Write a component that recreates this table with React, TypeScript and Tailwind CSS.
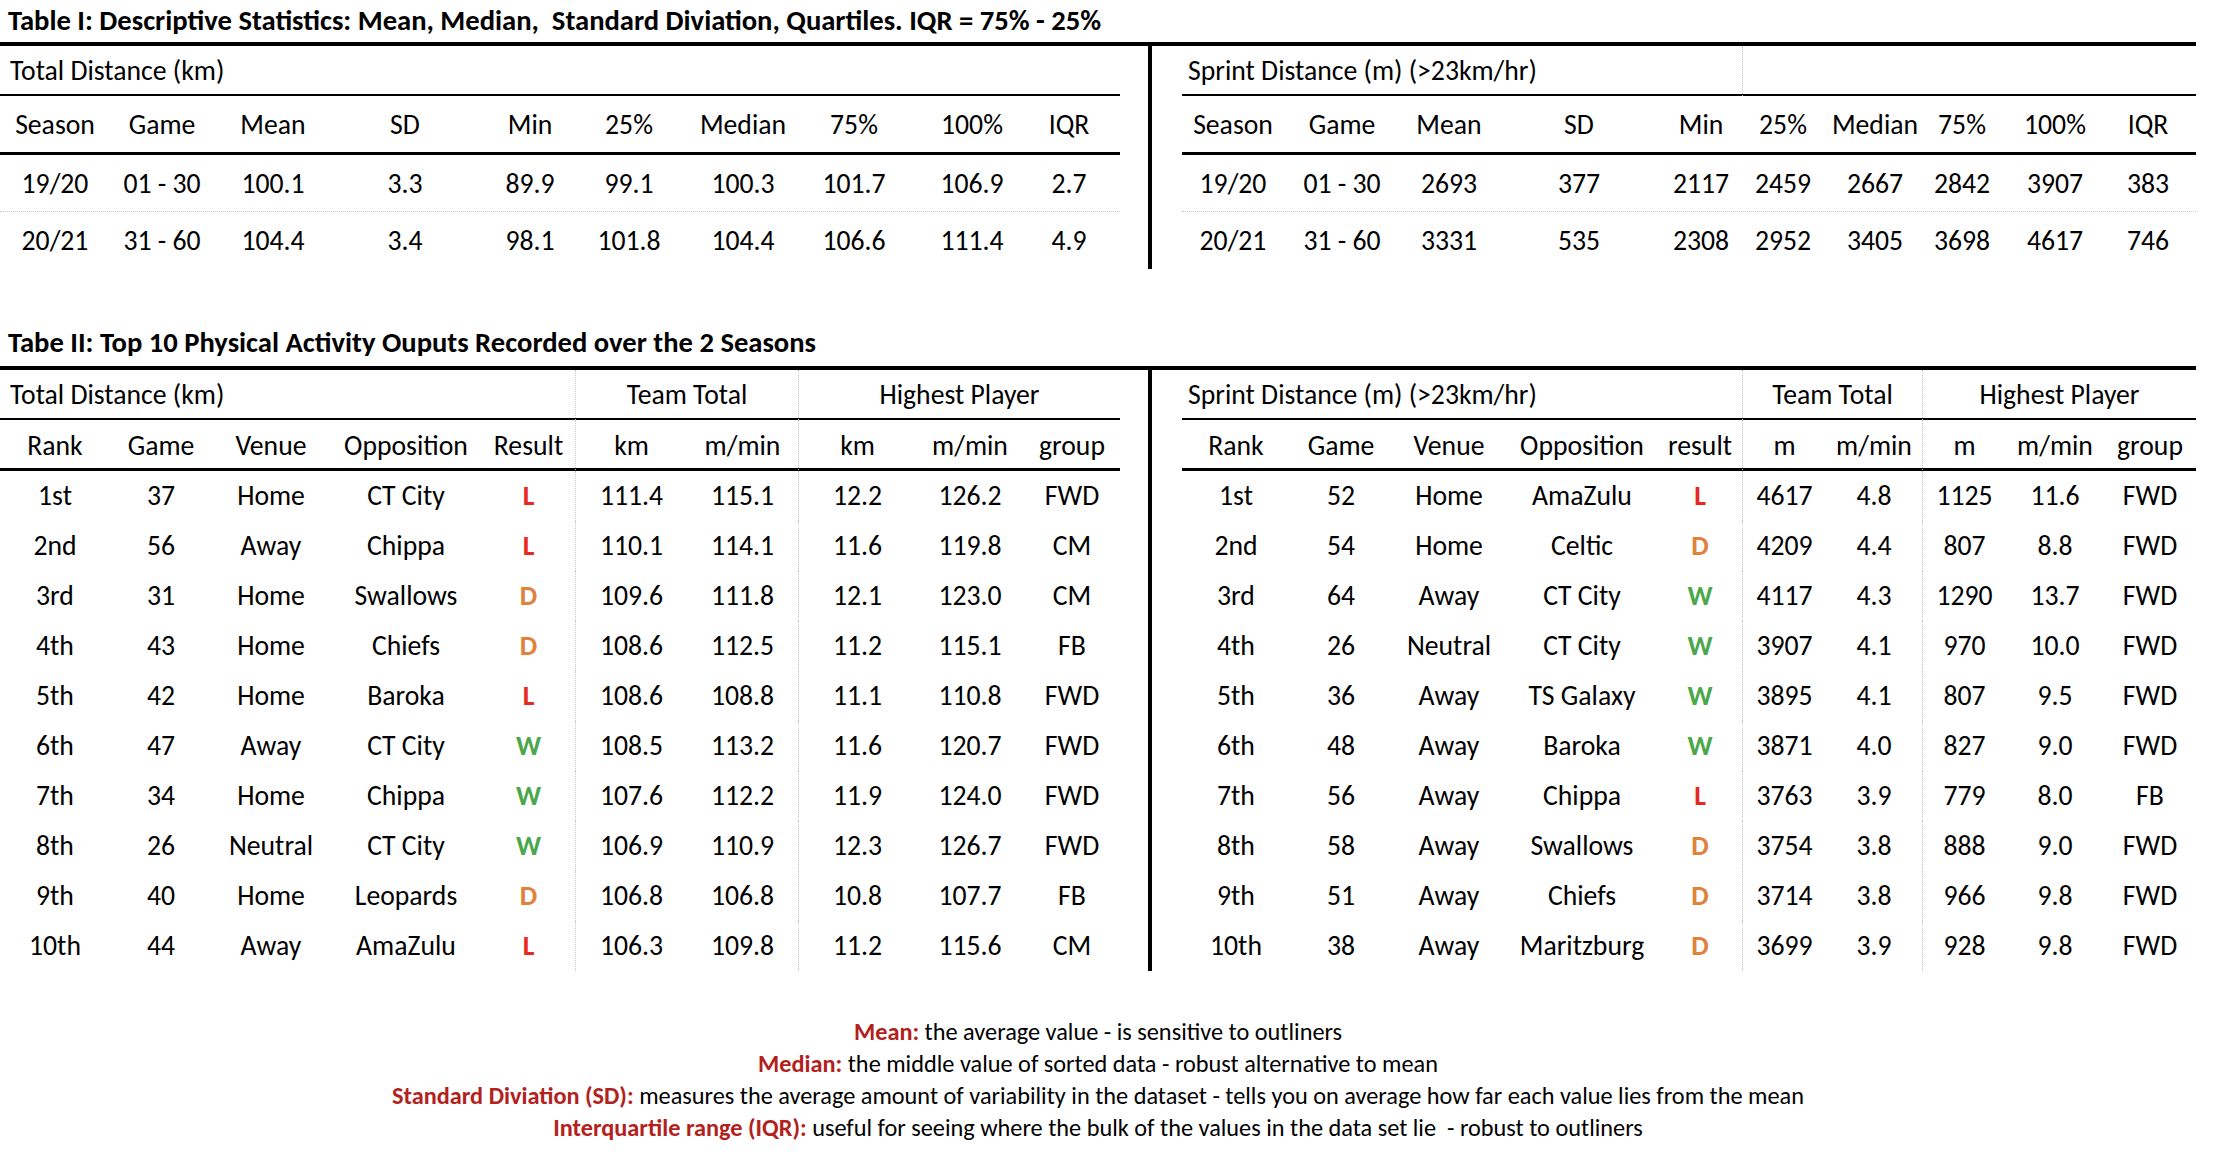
import React from 'react';

// Calibri-like stack; Carlito shares Calibri's metrics
const FONT = 'font-[family-name:Carlito,Calibri,Roboto,sans-serif]';
const SEP = 'border-l border-dotted border-[#c8c8c8]';

const RESULT_COLOR: Record<string, string> = {
  L: 'text-[#e8291f]',
  D: 'text-[#e0813c]',
  W: 'text-[#4aa84b]',
};

const statsLeft = {
  head: ['Season', 'Game', 'Mean', 'SD', 'Min', '25%', 'Median', '75%', '100%', 'IQR'],
  rows: [
    ['19/20', '01 - 30', '100.1', '3.3', '89.9', '99.1', '100.3', '101.7', '106.9', '2.7'],
    ['20/21', '31 - 60', '104.4', '3.4', '98.1', '101.8', '104.4', '106.6', '111.4', '4.9'],
  ],
};

const statsRight = {
  head: ['Season', 'Game', 'Mean', 'SD', 'Min', '25%', 'Median', '75%', '100%', 'IQR'],
  rows: [
    ['19/20', '01 - 30', '2693', '377', '2117', '2459', '2667', '2842', '3907', '383'],
    ['20/21', '31 - 60', '3331', '535', '2308', '2952', '3405', '3698', '4617', '746'],
  ],
};

const topLeft = {
  head: ['Rank', 'Game', 'Venue', 'Opposition', 'Result', 'km', 'm/min', 'km', 'm/min', 'group'],
  rows: [
    ['1st', '37', 'Home', 'CT City', 'L', '111.4', '115.1', '12.2', '126.2', 'FWD'],
    ['2nd', '56', 'Away', 'Chippa', 'L', '110.1', '114.1', '11.6', '119.8', 'CM'],
    ['3rd', '31', 'Home', 'Swallows', 'D', '109.6', '111.8', '12.1', '123.0', 'CM'],
    ['4th', '43', 'Home', 'Chiefs', 'D', '108.6', '112.5', '11.2', '115.1', 'FB'],
    ['5th', '42', 'Home', 'Baroka', 'L', '108.6', '108.8', '11.1', '110.8', 'FWD'],
    ['6th', '47', 'Away', 'CT City', 'W', '108.5', '113.2', '11.6', '120.7', 'FWD'],
    ['7th', '34', 'Home', 'Chippa', 'W', '107.6', '112.2', '11.9', '124.0', 'FWD'],
    ['8th', '26', 'Neutral', 'CT City', 'W', '106.9', '110.9', '12.3', '126.7', 'FWD'],
    ['9th', '40', 'Home', 'Leopards', 'D', '106.8', '106.8', '10.8', '107.7', 'FB'],
    ['10th', '44', 'Away', 'AmaZulu', 'L', '106.3', '109.8', '11.2', '115.6', 'CM'],
  ],
};

const topRight = {
  head: ['Rank', 'Game', 'Venue', 'Opposition', 'result', 'm', 'm/min', 'm', 'm/min', 'group'],
  rows: [
    ['1st', '52', 'Home', 'AmaZulu', 'L', '4617', '4.8', '1125', '11.6', 'FWD'],
    ['2nd', '54', 'Home', 'Celtic', 'D', '4209', '4.4', '807', '8.8', 'FWD'],
    ['3rd', '64', 'Away', 'CT City', 'W', '4117', '4.3', '1290', '13.7', 'FWD'],
    ['4th', '26', 'Neutral', 'CT City', 'W', '3907', '4.1', '970', '10.0', 'FWD'],
    ['5th', '36', 'Away', 'TS Galaxy', 'W', '3895', '4.1', '807', '9.5', 'FWD'],
    ['6th', '48', 'Away', 'Baroka', 'W', '3871', '4.0', '827', '9.0', 'FWD'],
    ['7th', '56', 'Away', 'Chippa', 'L', '3763', '3.9', '779', '8.0', 'FB'],
    ['8th', '58', 'Away', 'Swallows', 'D', '3754', '3.8', '888', '9.0', 'FWD'],
    ['9th', '51', 'Away', 'Chiefs', 'D', '3714', '3.8', '966', '9.8', 'FWD'],
    ['10th', '38', 'Away', 'Maritzburg', 'D', '3699', '3.9', '928', '9.8', 'FWD'],
  ],
};

function StatsTable(props: {
  title: string;
  cols: string;
  titleCols: string;
  titlePad: string;
  lastPad: string;
  split?: boolean;
  data: { head: string[]; rows: string[][] };
}) {
  const { data } = props;
  const lastIdx = data.head.length - 1;
  return (
    <div>
      <div className={`grid h-[50px] border-b-2 border-black leading-[50px] ${props.titleCols}`}>
        <div className={`whitespace-nowrap ${props.titlePad}`}>{props.title}</div>
        {props.split && <div className={SEP}></div>}
      </div>
      <div className={`grid h-[59px] border-b-[3px] border-black leading-[58px] ${props.cols}`}>
        {data.head.map((h, i) => (
          <div key={i} className={`text-center whitespace-nowrap ${i === lastIdx ? props.lastPad : ''}`}>
            {h}
          </div>
        ))}
      </div>
      {data.rows.map((row, r) => (
        <div
          key={r}
          className={`grid h-[57px] leading-[57px] ${props.cols} ${r === 0 ? 'border-b border-dotted border-[#c8c8c8]' : ''}`}
        >
          {row.map((v, i) => (
            <div key={i} className={`text-center whitespace-nowrap ${i === lastIdx ? props.lastPad : ''}`}>
              {v}
            </div>
          ))}
        </div>
      ))}
    </div>
  );
}

function TopTable(props: {
  title: string;
  cols: string;
  groupCols: string;
  titlePad: string;
  data: { head: string[]; rows: string[][] };
}) {
  const { data } = props;
  const sep = (i: number) => (i === 5 || i === 7 ? SEP : '');
  return (
    <div>
      <div className={`grid h-[50px] border-b-2 border-black leading-[50px] ${props.groupCols}`}>
        <div className={`whitespace-nowrap ${props.titlePad}`}>{props.title}</div>
        <div className={`text-center ${SEP}`}>Team Total</div>
        <div className={`text-center ${SEP}`}>Highest Player</div>
      </div>
      <div className={`grid h-[51px] border-b-[3px] border-black leading-[52px] ${props.cols}`}>
        {data.head.map((h, i) => (
          <div key={i} className={`text-center whitespace-nowrap ${sep(i)}`}>
            {h}
          </div>
        ))}
      </div>
      {data.rows.map((row, r) => (
        <div key={r} className={`grid h-[50px] leading-[49px] ${props.cols}`}>
          {row.map((v, i) => (
            <div
              key={i}
              className={`text-center whitespace-nowrap ${sep(i)} ${i === 4 ? `font-bold ${RESULT_COLOR[v]}` : ''}`}
            >
              {v}
            </div>
          ))}
        </div>
      ))}
    </div>
  );
}

export default function App() {
  return (
    <div className={`${FONT} w-[2196px] bg-white text-[27.7px] text-black`}>
      <div className="h-[42px] pl-[8px] text-[28.6px] font-bold leading-[41px] whitespace-pre">
        Table I: Descriptive Statistics: Mean, Median,  Standard Diviation, Quartiles. IQR = 75% - 25%
      </div>
      <div className="flex border-t-4 border-black">
        <div className="w-[1120px]">
          <StatsTable
            title="Total Distance (km)"
            titleCols="grid-cols-[1120px]"
            titlePad="pl-[10px]"
            cols="grid-cols-[110px_104px_118px_146px_104px_94px_134px_88px_148px_74px]"
            lastPad="pr-[28px]"
            data={statsLeft}
          />
        </div>
        <div className="ml-[28px] w-[4px] bg-black"></div>
        <div className="ml-[30px] w-[1014px]">
          <StatsTable
            title="Sprint Distance (m) (>23km/hr)"
            titleCols="grid-cols-[560px_454px]"
            titlePad="pl-[6px]"
            split
            cols="grid-cols-[102px_116px_98px_162px_82px_82px_102px_72px_114px_84px]"
            lastPad="pr-[12px]"
            data={statsRight}
          />
        </div>
      </div>

      <div className="mt-[52px] h-[45px] pl-[8px] text-[28.6px] font-bold leading-[44px] whitespace-nowrap">
        Tabe II: Top 10 Physical Activity Ouputs Recorded over the 2 Seasons
      </div>
      <div className="flex border-t-4 border-black">
        <div className="w-[1120px]">
          <TopTable
            title="Total Distance (km)"
            titlePad="pl-[10px]"
            groupCols="grid-cols-[575px_223px_322px]"
            cols="grid-cols-[110px_102px_118px_152px_93px_112px_111px_118px_108px_96px]"
            data={topLeft}
          />
        </div>
        <div className="ml-[28px] w-[4px] bg-black"></div>
        <div className="ml-[30px] w-[1014px]">
          <TopTable
            title="Sprint Distance (m) (>23km/hr)"
            titlePad="pl-[6px]"
            groupCols="grid-cols-[560px_180px_274px]"
            cols="grid-cols-[108px_102px_114px_152px_84px_84px_96px_84px_98px_92px]"
            data={topRight}
          />
        </div>
      </div>

      <div className="mt-[45px] pb-[20px] text-center text-[24.3px] leading-[32px]">
        <p>
          <span className="font-bold text-[#b3211c]">Mean:</span> the average value - is sensitive to outliners
        </p>
        <p>
          <span className="font-bold text-[#b3211c]">Median:</span> the middle value of sorted data - robust alternative to mean
        </p>
        <p>
          <span className="font-bold text-[#b3211c]">Standard Diviation (SD):</span> measures the average amount of
          variability in the dataset - tells you on average how far each value lies from the mean
        </p>
        <p className="whitespace-pre">
          <span className="font-bold text-[#b3211c]">Interquartile range (IQR):</span> useful for seeing where the bulk
          of the values in the data set lie  - robust to outliners
        </p>
      </div>
    </div>
  );
}
